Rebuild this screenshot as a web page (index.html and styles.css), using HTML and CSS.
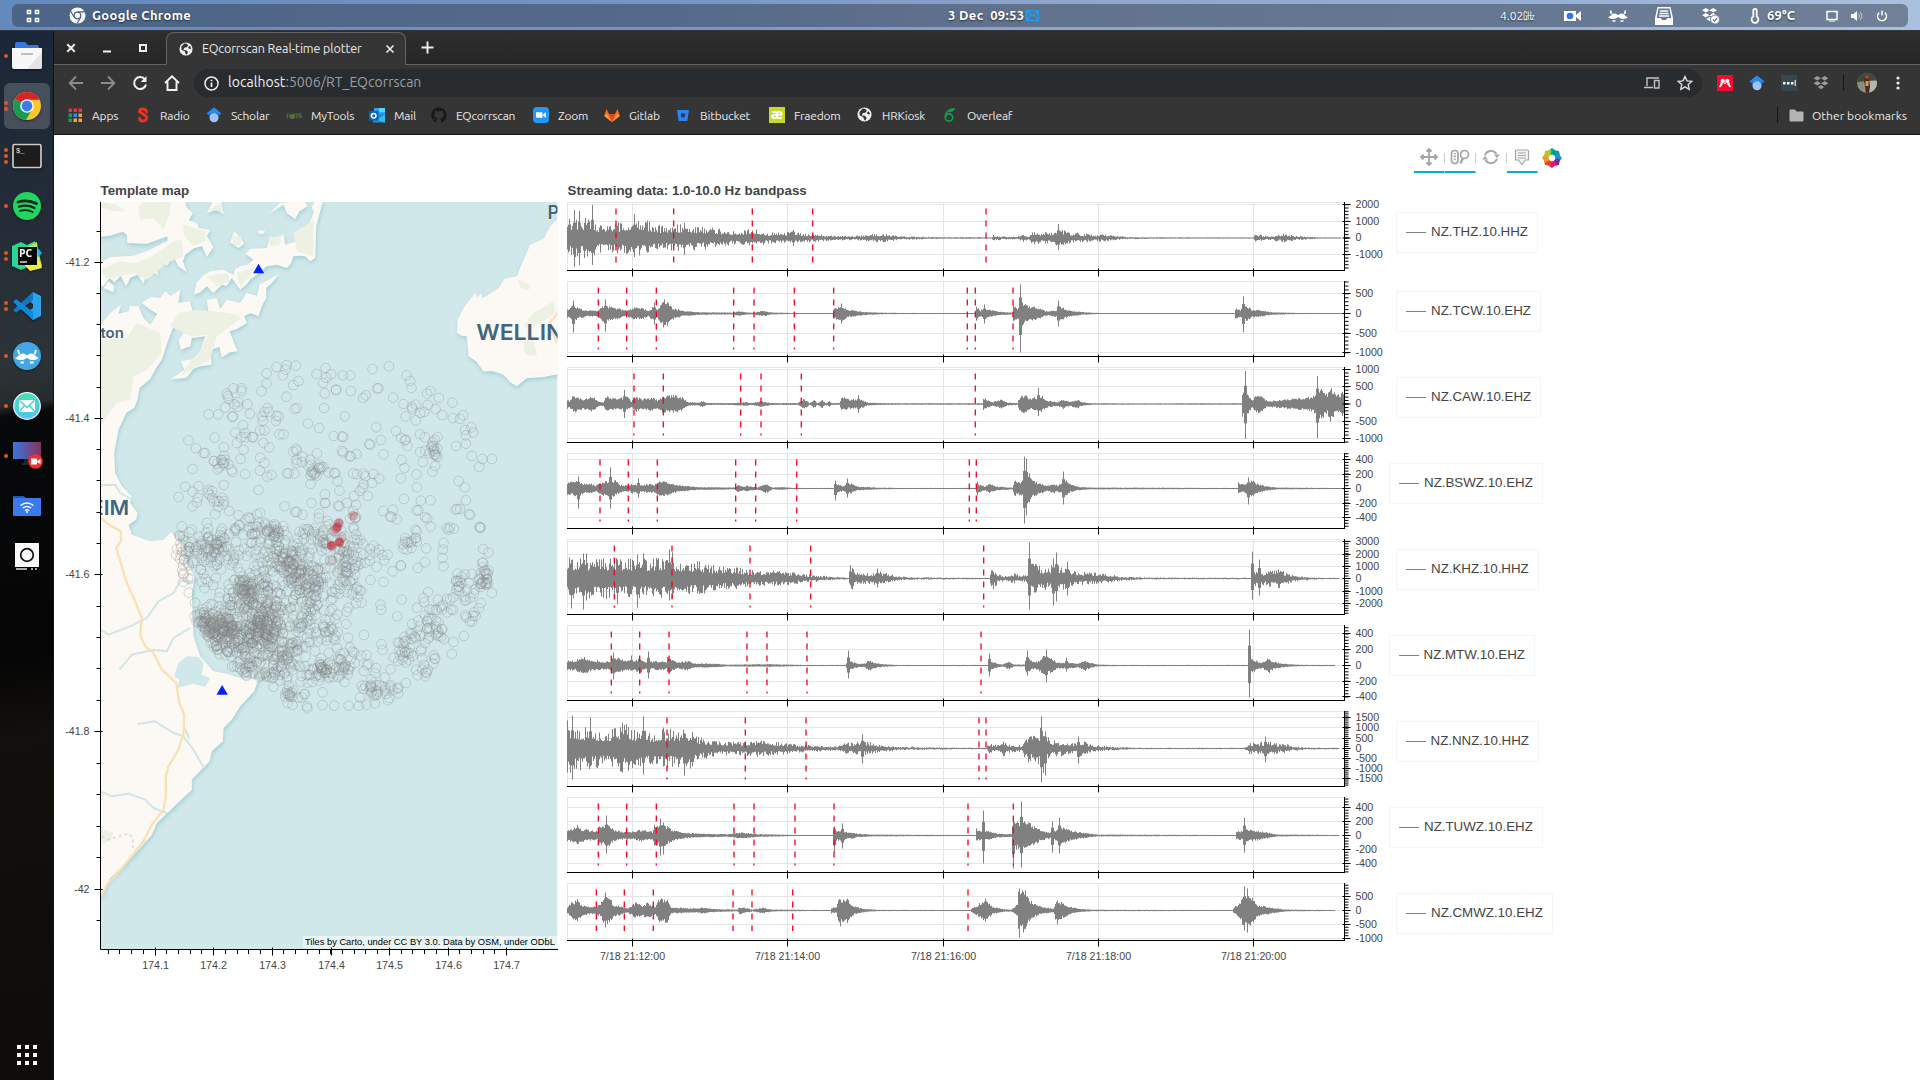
FILE: index.html
```html
<!DOCTYPE html>
<html lang="en">
<head>
<meta charset="utf-8">
<title>EQcorrscan Real-time plotter</title>
<link rel="stylesheet" href="styles.css">
</head>
<body>
<svg class="defs" width="0" height="0" aria-hidden="true">
  <symbol id="globe" viewBox="0 0 16 16"><circle cx="8" cy="8" r="7.500" fill="#eee"/><path d="M6 1.600 9 2l1.600 2.200L8.600 6 6 6.600 5 9l3.400.4 1.800 2L9 14.600 7.400 13 6.600 10.600 3 9 2.600 5.400ZM12.600 4.400 14 7.600l-2.600.2L10.400 6Z" fill="#333"/></symbol>
  <symbol id="dropbox" viewBox="0 0 16 16"><path d="M4.300 1 8 3.300 4.300 5.600.6 3.300ZM11.700 1l3.700 2.300-3.700 2.300L8 3.300ZM4.300 5.900 8 8.200l-3.700 2.300L.6 8.200ZM11.700 5.900l3.700 2.300-3.700 2.300L8 8.200ZM8 9.900l3.200 2.100L8 14.200 4.800 12Z" fill="currentColor"/></symbol>
  <symbol id="scholar" viewBox="0 0 16 16"><path d="M8 .5 15.500 6.600 8 13 .5 6.600Z" fill="#1a73d8"/><path d="M8 .5 15.500 6.600H.5Z" fill="#2b8be8"/><circle cx="8" cy="10.800" r="4.500" fill="#a0c3ff"/></symbol>
  <symbol id="moustache" viewBox="0 0 20 14"><path d="M2.500 1.500 3.500 5M17.500 1.500 16.500 5" stroke="currentColor" stroke-width="1.600"/><path d="M0 8C3 8 3 4.500 6.500 4.500 8.600 4.500 9.300 6 10 6s1.400-1.500 3.500-1.500C17 4.500 17 8 20 8c-2 2.600-7.500 2.600-10 0C7.500 10.600 2 10.600 0 8Z" fill="currentColor"/><path d="M4.500 12h3M12.500 12h3" stroke="currentColor" stroke-width="1.500"/></symbol>
</svg>

<header class="topbar">
  <div class="panel">
    <div class="panel-left">
      <svg width="14" height="14" viewBox="0 0 14 14" fill="none" stroke="#fff" stroke-width="1.500"><path d="M1.500 1.500h3v3h-3ZM9.500 1.500h3v3h-3ZM1.500 9.500h3v3h-3ZM9.500 9.500h3v3h-3Z"/></svg>
      <svg class="panel-app-icon" width="17" height="17" viewBox="0 0 17 17"><circle cx="8.500" cy="8.500" r="8" fill="#fff"/><circle cx="8.500" cy="8.500" r="3.300" fill="#fff" stroke="#4d6487" stroke-width="1.300"/><path d="M8.500 4.800H16M5.200 10.200 1.600 4M11.700 10.400 8 16.500" stroke="#4d6487" stroke-width="1.200"/></svg>
      <span class="panel-title">Google Chrome</span>
    </div>
    <div class="panel-clock"><span>3 Dec&nbsp; 09:53</span>
      <svg width="13" height="11" viewBox="0 0 13 11" fill="none" stroke="#1fa0ee" stroke-width="1.200"><path d="M.6.6h11.800v9.800H.6ZM1 1l5.500 5L12 1M1 10l4-5M12 10 8 5"/></svg>
    </div>
    <div class="panel-right">
      <span class="ghz">4.02㎓</span>
      <svg class="i-cam" width="20" height="16" viewBox="0 0 20 16"><path d="M1 3h12v10H1Z" fill="#fff"/><path d="m13 7 5-4v10l-5-4Z" fill="#fff"/><circle cx="7" cy="8" r="3.300" fill="#3273e6"/></svg>
      <svg class="i-mou" width="20" height="14"><use href="#moustache"/></svg>
      <svg class="i-tray" width="20" height="20" viewBox="0 0 20 20"><path d="M3.500 1h13l2.500 11v7H1v-7Z" fill="#fff"/><path d="M4.500 2.500h11l1.800 9.500h-4l-1.300 2H8l-1.300-2h-4Z" fill="#6b7b96"/><path d="M6 5h8M5.500 7.500h9M5 10h10" stroke="#fff" stroke-width="1.300"/></svg>
      <svg class="i-dbx" width="20" height="18" viewBox="0 0 20 18"><use href="#dropbox" width="17" height="16"/><circle cx="14" cy="12.500" r="4.500" fill="#fff" stroke="#71809a"/><path d="m12 12.500 1.500 1.600 2.700-3" fill="none" stroke="#5d6d88" stroke-width="1.200"/></svg>
      <svg class="i-therm" width="10" height="16" viewBox="0 0 10 16" fill="none" stroke="#fff" stroke-width="1.800"><path d="M3.300 8.500V2.600a1.700 1.700 0 0 1 3.400 0v5.900a3.400 3.400 0 1 1-3.400 0Z"/></svg>
      <span class="temp">69°C</span>
      <svg class="i-sq" width="14" height="14" viewBox="0 0 14 14"><rect x="2" y="2.500" width="10" height="8" fill="none" stroke="#fff" stroke-width="1.500"/><path d="M4 12h6" stroke="#fff"/></svg>
      <svg class="i-s" width="14" height="14" viewBox="0 0 14 14"><path d="M1 5h2.500L7 2v10L3.500 9H1Z" fill="#fff"/><path d="M8.500 4.500q2 2.500 0 5M10.500 3q3 4 0 8" stroke="#c4cbd6" fill="none"/></svg>
      <svg class="i-s" width="14" height="14" viewBox="0 0 14 14" fill="none" stroke="#fff" stroke-width="1.500"><path d="M4.200 3.700a4.500 4.500 0 1 0 5.600 0M7 1.500v5"/></svg>
    </div>
  </div>
</header>

<div class="desktop">
<nav class="dock">
  <div class="app"><span class="dots"><i></i></span><svg width="32" height="32" viewBox="0 0 32 32"><path d="M4 4q0-2 2-2h8l3 3h9q2 0 2 2v8H4Z" fill="#3577e5"/><path d="M1 8h30v19q0 2-2 2H3q-2 0-2-2Z" fill="#f7f7f7"/><path d="M31 12v15q0 2-2 2H16Z" fill="#e4e4e4"/><path d="M10 14h12" stroke="#aaa" stroke-width="1.500"/></svg></div>
  <div class="app active"><span class="dots"><i></i><i></i></span><svg width="30" height="30" viewBox="0 0 30 30"><circle cx="15" cy="15" r="14" fill="#fdc52b"/><path d="M15 15 2.900 8A14 14 0 0 1 27.500 8.700H15Z" fill="#d5252a"/><path d="M15 15 2.900 8A14 14 0 0 0 14 29l6-10.500Z" fill="#1a9a50"/><circle cx="15" cy="15" r="6.800" fill="#fff"/><circle cx="15" cy="15" r="5.400" fill="#3b7def"/></svg></div>
  <div class="app"><span class="dots"><i></i><i></i><i></i></span><svg width="30" height="26" viewBox="0 0 30 26"><rect x="1" y="1.500" width="28" height="23" rx="1.500" fill="#1c1c1c" stroke="#c9c9c9" stroke-width="1.700"/><text x="4" y="10" font-family="Liberation Mono" font-size="7" fill="#eee">$_</text></svg></div>
  <div class="app"><span class="dots"><i></i></span><svg width="30" height="30" viewBox="0 0 30 30"><circle cx="15" cy="15" r="14" fill="#1fd660"/><g fill="none" stroke="#15251b" stroke-linecap="round"><path d="M6 11q9.500-3 18.500 1.500" stroke-width="2.800"/><path d="M7 15.600q8.500-2.300 15.500 1.400" stroke-width="2.300"/><path d="M8 19.800q7-1.800 12.500 1.200" stroke-width="1.900"/></g></svg></div>
  <div class="app"><span class="dots"><i></i><i></i></span><svg width="32" height="32" viewBox="0 0 32 32"><path d="m1 6 9-4 6 3 8-4 2 8-4 16-12 5L1 26Z" fill="#27d797"/><path d="m12 9 14-7 1 8 4 16-11 4-10-8Z" fill="#b5ea4f"/><path d="m26 7 5 6-4 4Z" fill="#15b4f4"/><path d="m11 22 16-5 4 11-12 3Z" fill="#f2ec41"/><rect x="7" y="7" width="19" height="18" fill="#080808"/><text x="8" y="16.500" font-family="Open Sans" font-weight="700" font-size="10.500" fill="#fff">PC</text><path d="M9 22h7" stroke="#fff" stroke-width="1.300"/></svg></div>
  <div class="app"><span class="dots"><i></i><i></i></span><svg width="30" height="30" viewBox="0 0 30 30"><path d="m21 1 8 4v20l-8 4-7-7 7-5V13l-7-5Z" fill="#2aa3ee"/><path d="M21 1v8L4 22l-3-3Z" fill="#1277bd"/><path d="M21 29v-8L4 8l-3 3Z" fill="#0d89d8"/></svg></div>
  <div class="app"><span class="dots"><i></i></span><svg width="30" height="30" viewBox="0 0 30 30"><circle cx="15" cy="15" r="14" fill="#45a6e5"/><g color="#fff"><use href="#moustache" x="3" y="7" width="24" height="17"/></g></svg></div>
  <div class="app"><span class="dots"><i></i></span><svg width="30" height="30" viewBox="0 0 30 30"><defs><linearGradient id="mg" x2="0" y2="1"><stop stop-color="#43e2ad"/><stop offset="1" stop-color="#4fc6f0"/></linearGradient></defs><circle cx="15" cy="15" r="13.300" fill="url(#mg)" stroke="#eef" stroke-width="1.300"/><rect x="7" y="9" width="16" height="12" rx="1" fill="#fff"/><path d="m7.500 9.500 7.500 7 7.500-7M7.500 20.500l5-6M22.500 20.500l-5-6" fill="none" stroke="#49cfd2" stroke-width="1.300"/></svg></div>
  <div class="app"><span class="dots"><i></i></span><svg width="34" height="30" viewBox="0 0 34 30"><defs><linearGradient id="sg"><stop stop-color="#3b74df"/><stop offset="1" stop-color="#84345e"/></linearGradient></defs><path d="M3 1h28v17H3Z" fill="url(#sg)"/><path d="M14 18h6v4h2v2H12v-2h2Z" fill="#20242c"/><circle cx="25.500" cy="20.500" r="7.300" fill="#ee2f33"/><path d="M21 17.500h6v6h-6ZM27 20l3.500-2v5L27 21Z" fill="#fff"/></svg></div>
  <div class="app"><svg width="30" height="24" viewBox="0 0 30 24"><path d="M1 2h10l3 2h15v17q0 1-1 1H2q-1 0-1-1Z" fill="#3a7bea"/><path d="M1 2h10l3 2H1Z" fill="#2456b8"/><g fill="none" stroke="#fff" stroke-width="1.500"><path d="M8.500 11.500q6.500-5 13 0M10.800 14q4.200-3 8.400 0M13 16.500q2-1.400 4 0"/></g><circle cx="15" cy="18" r="1" fill="#fff"/></svg></div>
  <div class="app"><svg width="26" height="30" viewBox="0 0 26 30"><path d="M1 2h24v24H1Z" fill="#fafafa"/><path d="M2 28h11M17 28h2M21 28h2" stroke="#ddd" stroke-width="1.500"/><circle cx="13" cy="14" r="6.300" fill="none" stroke="#111" stroke-width="1.700"/></svg></div>
  <div class="app launcher"><svg width="22" height="22" viewBox="0 0 22 22" fill="#fff"><path d="M1 1h4v4H1ZM9 1h4v4H9ZM17 1h4v4h-4ZM1 9h4v4H1ZM9 9h4v4H9ZM17 9h4v4h-4ZM1 17h4v4H1ZM9 17h4v4H9ZM17 17h4v4h-4Z"/></svg></div>
</nav>

<main class="browser">
  <div class="tabstrip">
    <div class="winbtns">
      <svg width="12" height="12" viewBox="0 0 12 12" stroke="#f2f2f2" stroke-width="2"><path d="m2.300 2.300 7.400 7.400M9.700 2.300 2.300 9.700"/></svg>
      <svg width="12" height="12" viewBox="0 0 12 12" stroke="#f2f2f2" stroke-width="2"><path d="M2 9.500h8"/></svg>
      <svg width="12" height="12" viewBox="0 0 12 12" fill="none" stroke="#f2f2f2" stroke-width="2"><path d="M3 3h6v6H3Z"/></svg>
    </div>
    <div class="tab">
      <svg width="14" height="14"><use href="#globe"/></svg>
      <span>EQcorrscan Real-time plotter</span>
      <svg class="tab-close" width="10" height="10" viewBox="0 0 10 10" stroke="#e8e8e8" stroke-width="1.700"><path d="m1.500 1.500 7 7M8.500 1.500l-7 7"/></svg>
    </div>
    <svg class="newtab" width="13" height="13" viewBox="0 0 13 13" stroke="#eee" stroke-width="1.900"><path d="M6.500.5v12M.5 6.500h12"/></svg>
  </div>
  <div class="toolbar">
    <svg width="16" height="16" viewBox="0 0 16 16" fill="none" stroke="#8b8b8b" stroke-width="1.800"><path d="M15 8H2M8 1.500 1.700 8 8 14.500"/></svg>
    <svg width="16" height="16" viewBox="0 0 16 16" fill="none" stroke="#8b8b8b" stroke-width="1.800"><path d="M1 8h13M8 1.500 14.300 8 8 14.500"/></svg>
    <svg width="16" height="16" viewBox="0 0 16 16"><path d="M13 4.500A6 6 0 1 0 14 9.500" fill="none" stroke="#f2f2f2" stroke-width="2"/><path d="M14.500 1v6H8.700Z" fill="#f2f2f2"/></svg>
    <svg width="16" height="16" viewBox="0 0 16 16" fill="none" stroke="#f2f2f2" stroke-width="1.900"><path d="M1 8 8 1.300 15 8M3.500 6.500v8.500h9V6.500"/></svg>
    <div class="omnibox">
      <svg width="15" height="15" viewBox="0 0 15 15"><circle cx="7.500" cy="7.500" r="6.500" fill="none" stroke="#eee" stroke-width="1.500"/><path d="M7.500 6.500V11M7.500 3.800v1.500" stroke="#eee" stroke-width="1.700"/></svg>
      <span class="url">localhost<b>:5006/RT_EQcorrscan</b></span>
      <svg class="devices" width="16" height="12" viewBox="0 0 16 12" fill="none" stroke="#c4c4c4" stroke-width="1.400"><path d="M15 1H3v8M0 10.500h9M10.500 3.500h4.500v7.500h-4.500Z"/></svg>
      <svg class="star" width="16" height="16" viewBox="0 0 16 16" fill="none" stroke="#ddd" stroke-width="1.400"><path d="m8 1.500 2 4.400 4.700.5-3.500 3.200 1 4.700L8 11.900l-4.200 2.400 1-4.700L1.300 6.400 6 5.900Z"/></svg>
    </div>
    <div class="ext">
      <svg width="16" height="16" viewBox="0 0 16 16"><path d="M0 0h16v16H0Z" fill="#f5092d"/><path d="M2.500 12 4.500 9.500M13.500 12l-2-2.500" stroke="#fff" stroke-width="1.800"/><path d="M4.500 10V7.500M8 9V7.500M11.500 10V7.500" stroke="#fff" stroke-width="2.200"/><circle cx="5.700" cy="5.800" r="2.100" fill="#fff"/><circle cx="10.300" cy="5.800" r="2.100" fill="#fff"/></svg>
      <svg width="16" height="16"><use href="#scholar"/></svg>
      <svg width="16" height="16" viewBox="0 0 16 16"><path d="M0 0h16v16H0Z" fill="#37474f"/><path d="M2 7h2.500v2.500H2ZM6 7h2.500v2.500H6ZM10 7h2.500v2.500H10ZM13.700 5h1v6h-1Z" fill="#fff"/></svg>
      <svg width="16" height="16" color="#9b9b9b"><use href="#dropbox"/></svg>
    </div>
    <div class="ext-sep"></div>
    <svg class="avatar" width="20" height="20" viewBox="0 0 20 20"><defs><clipPath id="av"><circle cx="10" cy="10" r="10"/></clipPath></defs><g clip-path="url(#av)"><path d="M0 0h20v20H0Z" fill="#8b8d80"/><path d="M0 0h20v7L0 9Z" fill="#3d4a35"/><path d="M13 8h7v12h-8Z" fill="#b7b5ae"/><path d="M8 4q2-3 4 0v4l1 5-1 7H9l-1-7-1-5Z" fill="#4a2a22"/><path d="M8.500 8h3v5h-3Z" fill="#d9a13b"/><circle cx="10" cy="4" r="1.800" fill="#c7413a"/></g></svg>
    <svg class="menu" width="4" height="16" viewBox="0 0 4 16" fill="#eee"><circle cx="2" cy="3" r="1.600"/><circle cx="2" cy="8" r="1.600"/><circle cx="2" cy="13" r="1.600"/></svg>
  </div>
  <div class="bookmarks">
    <div class="bm"><svg width="16" height="16" viewBox="0 0 16 16"><path d="M1.500 1.500h3.500v3.500H1.500ZM6.500 1.500H10v3.500H6.500ZM11.500 1.500H15v3.500h-3.500Z" fill="#f0303c"/><path d="M1.500 6.500h3.500V10H1.500Z" fill="#15a05c"/><path d="M6.500 6.500H10V10H6.500Z" fill="#2b8df0"/><path d="M11.500 6.500H15V10h-3.500ZM6.500 11.500H10V15H6.500ZM11.500 11.500H15V15h-3.500Z" fill="#f2a33c"/><path d="M1.500 11.500h3.500V15H1.500Z" fill="#15a05c"/></svg><span>Apps</span></div>
    <div class="bm"><svg width="16" height="16" viewBox="0 0 16 16" fill="none" stroke="#ee3124" stroke-width="2.800" stroke-linecap="round" stroke-linejoin="round"><path d="M11.500 5Q11.500 2 8 2 4.500 2 4.500 4.500L11.500 9.500Q12 14 8 14 4.500 14 4.500 11.500"/></svg><span>Radio</span></div>
    <div class="bm"><svg width="16" height="16"><use href="#scholar"/></svg><span>Scholar</span></div>
    <div class="bm"><svg width="16" height="16" viewBox="0 0 16 16"><text x="0" y="10.500" font-family="DejaVu Serif" font-size="6" textLength="16" fill="#5d9a4c">F<tspan fill="#7fae2a" font-weight="700">@</tspan>TS</text></svg><span>MyTools</span></div>
    <div class="bm"><svg width="16" height="16" viewBox="0 0 16 16"><path d="M5 1h11v8H5Z" fill="#28a8ea"/><path d="M10 1h6v4h-6Z" fill="#50d9ff"/><path d="M4 7h12v8.500H4Z" fill="#1490df"/><path d="m16 7-8 6 8 2.500Z" fill="#35b8f1"/><path d="M0 4h9.500v9.500H0Z" fill="#0a64b5"/><circle cx="4.700" cy="8.700" r="2.300" fill="none" stroke="#fff" stroke-width="1.500"/></svg><span>Mail</span></div>
    <div class="bm"><svg width="16" height="16" viewBox="0 0 16 16"><path d="M8 .4a7.700 7.700 0 0 0-2.500 15c.4.100.5-.2.500-.400v-1.500c-2.100.500-2.600-.900-2.600-.900-.4-.9-.9-1.100-.9-1.100-.7-.500.100-.500.100-.500.800.100 1.200.800 1.200.800.700 1.200 1.800.900 2.300.700 0-.5.300-.9.500-1.100-1.700-.2-3.500-.9-3.500-3.800 0-.8.300-1.500.8-2.100 0-.2-.3-1 .1-2.100 0 0 .6-.2 2.100.8a7 7 0 0 1 3.800 0c1.500-1 2.100-.8 2.100-.8.4 1.100.1 1.900.1 2.100.5.600.8 1.200.8 2.100 0 2.900-1.800 3.600-3.500 3.800.3.200.500.700.500 1.400V15c0 .2.100.5.500.4A7.700 7.700 0 0 0 8 .4Z" fill="#181818"/></svg><span>EQcorrscan</span></div>
    <div class="bm"><svg width="16" height="16" viewBox="0 0 16 16"><rect width="16" height="16" rx="4" fill="#2196fb"/><path d="M3 5.300h5.500q1 0 1 1v4.400H4q-1 0-1-1ZM10.200 7.200 13 5.300v5.400l-2.800-1.900Z" fill="#fff"/></svg><span>Zoom</span></div>
    <div class="bm"><svg width="16" height="16" viewBox="0 0 16 16"><path d="M8 15 .3 9 2.500 2 5 7h6l2.500-5 2.200 7Z" fill="#fc6d26"/><path d="M8 15 5 7h6Z" fill="#e24329"/><path d="M.3 9 2 6.500 8 15ZM15.700 9 14 6.500 8 15Z" fill="#fca326"/></svg><span>Gitlab</span></div>
    <div class="bm"><svg width="16" height="16" viewBox="0 0 16 16"><path d="M2 3h12l-1.700 11H3.700Z" fill="#2684ff"/><path d="M5.800 6.500h4.400l-.7 4h-3Z" fill="#353535"/></svg><span>Bitbucket</span></div>
    <div class="bm"><div class="fraedom">æ</div><span>Fraedom</span></div>
    <div class="bm"><svg width="16" height="16"><use href="#globe" width="15" height="15"/></svg><span>HRKiosk</span></div>
    <div class="bm"><svg width="16" height="16" viewBox="0 0 16 16" fill="none" stroke="#11a04b" stroke-width="1.700"><circle cx="7" cy="10.500" r="3.700"/><path d="M3.500 9.500Q3.500 4 9 3"/><path d="M6 3.500Q9 1 13 1.500 11.500 4.500 7.500 5" fill="#11a04b" stroke-width=".8"/></svg><span>Overleaf</span></div>
    <div class="bm-other"><svg width="15" height="13" viewBox="0 0 15 13"><path d="M.5 1.500q0-1 1-1H6l1.500 2h6q1 0 1 1v8q0 1-1 1h-12q-1 0-1-1Z" fill="#b4b4b4"/></svg><span>Other bookmarks</span></div>
  </div>

  <div class="page">
    <div class="bk-toolbar">
      <div class="tool on"><svg width="18" height="18" viewBox="0 0 18 18" fill="none" stroke="#a1a6a9" stroke-width="1.800"><path d="M9 1v16M1 9h16M6.500 3.500 9 1l2.500 2.500M6.500 14.500 9 17l2.500-2.500M3.500 6.500 1 9l2.500 2.500M14.500 6.500 17 9l-2.500 2.500"/></svg></div>
      <div class="tool on"><svg width="20" height="18" viewBox="0 0 20 18" fill="none" stroke="#a1a6a9" stroke-width="1.700"><rect x="1.500" y="2.500" width="6.500" height="13" rx="3.200"/><path d="M4.800 5v1.500M3.500 8.500h2.500M4.800 10.500V12"/><circle cx="14.500" cy="6.500" r="4"/><path d="M13 10 10.500 15.500" stroke-width="2.300"/></svg></div>
      <div class="tool"><svg width="18" height="18" viewBox="0 0 18 18"><path d="M3 7.500A6.300 6.300 0 0 1 14.500 6M15 10.500A6.300 6.300 0 0 1 3.500 12" fill="none" stroke="#a1a6a9" stroke-width="1.900"/><path d="M12 6.500h6l-3 3.500ZM0 11.500h6L3 8Z" fill="#a1a6a9"/></svg></div>
      <div class="tool on"><svg width="16" height="18" viewBox="0 0 16 18" fill="#f3f3f3" stroke="#a1a6a9" stroke-width="1.200"><path d="M2.500 2h11q1 0 1 1v9h-3L8 16.500 4.500 12h-3V3q0-1 1-1Z"/><path d="M4 5h8M4 7.500h8M4 10h8"/></svg></div>
      <svg class="bk-logo" id="bk-logo" width="20" height="20" viewBox="-10 -10 20 20"></svg>
    </div>
    <div class="figure">
      <section class="mapcol">
        <h2>Template map</h2>
        <svg id="map" width="513" height="790" viewBox="54 202 513 790">
          <svg x="100.500" y="202" width="457" height="747" viewBox="151 97 1371 2241" preserveAspectRatio="none">
            <defs>
              <filter id="coast" x="-5%" y="-5%" width="110%" height="110%"><feDropShadow dx="2" dy="6" stdDeviation="6" flood-color="#7fbcc4" flood-opacity=".6"/></filter>
            </defs>
            <rect x="151" y="97" width="1371" height="2241" fill="#d1e8ea"/>
            <g fill="#fcf8f4" filter="url(#coast)">
              <path d="M140 90H405L408 112 428 130 416 152 440 160 446 175 480 180 470 200 490 232 470 262 456 230 432 235 405 255 398 275 410 308 385 290 376 272 365 258 358 275 350 290 338 272 328 275 320 295 324 318 306 302 292 305 280 342 262 315 240 325 228 350 212 318 193 338 178 325 160 350 140 350V285L180 262 250 258 300 240 352 213 352 200 320 212 290 222 232 220 230 195 218 186 180 198 140 202Z"/>
              <path d="M430 375 440 338 458 318 480 305 500 302 520 300 550 315 555 298 570 290 592 285 610 270 585 252 600 238 650 235 660 200 680 205 700 195 705 225 740 215 755 190 770 170 782 150 790 130 785 110 800 90H820L810 125 798 170 795 265 780 275 765 260 750 258 730 260 722 282 710 295 680 285 650 290 620 315 600 330 588 345 570 360 545 325 530 348 515 345 490 370 470 350 450 368Z"/>
              <path d="M470 130 490 92 515 92 512 115 525 135 498 120ZM655 132 690 100 760 92 772 110 748 125 735 148 710 130 700 105ZM540 218 552 185 568 200 582 222 565 235ZM622 184 645 182 640 193 626 192ZM160 355 175 335 192 350 190 368Z"/>
              <path d="M140 480 180 430 212 405 205 432 235 425 240 408 265 410 280 445 300 465 322 432 300 420 275 400 300 383 330 385 345 365 362 378 390 360 385 400 418 395 430 430 475 430 470 390 500 385 510 418 530 390 570 400 590 370 620 378 628 345 655 330 686 312 665 340 648 355 648 385 635 410 625 440 602 430 582 440 590 460 560 478 538 485 550 515 562 545 540 548 515 563 508 532 480 540 485 585 450 590 430 597 408 625 362 628 402 600 392 575 430 568 452 540 465 500 425 505 420 530 392 540 385 510 412 475 370 470 348 530 335 570 318 595 300 628 268 655 262 690 252 715 228 730 205 780 192 850 195 910 215 950 245 980 240 1000 262 1030 258 1050 235 1065 245 1095 300 1115 340 1110 362 1088 400 1125 410 1180 434 1220 425 1270 430 1400 450 1460 490 1505 530 1512 570 1525 624 1530 612 1565 570 1610 545 1650 520 1675 518 1715 485 1745 478 1775 425 1830 425 1860 320 1960 305 1995 225 2085 180 2125 151 2185 140 2185Z"/>
              <path d="M1530 140 1500 170 1480 207 1440 225 1420 270 1400 320 1362 328 1345 355 1330 365 1298 385 1292 370 1282 382 1275 370 1240 415 1222 450 1220 490 1235 498 1250 500 1255 560 1278 575 1300 605 1330 605 1360 615 1380 638 1400 650 1430 625 1480 622 1530 612Z"/>
            </g>
            <g fill="#edf1e3">
              <path d="M275 97H360V130L340 180 310 145 270 150 265 115ZM151 97 200 105 225 125 190 125 151 112ZM400 165 470 185 465 215 430 230 400 195ZM151 300 210 275 250 280 300 265 370 215 395 210 400 260 350 280 290 330 250 310 170 330ZM470 320 530 310 540 335 500 350ZM560 310 620 290 570 355ZM730 190 790 150 790 260 740 245ZM655 205 695 197 690 225 660 230ZM545 200 575 200 570 230 550 225ZM475 120 515 100 520 125Z"/>
              <path d="M151 510 230 505 260 460 330 490 335 550 290 600 250 620 240 690 200 700 151 770ZM385 430 440 420 540 430 575 445 500 500 480 570 390 620 420 575 455 540 470 495 420 500 360 470Z"/>
              <path d="M1405 330 1440 345 1435 362 1410 355ZM1450 430 1510 395 1515 430 1440 480 1420 470ZM1420 520 1450 500 1460 560 1425 555Z"/>
              <path d="M151 1975 190 1990 185 2010 151 2025Z"/>
            </g>
            <path d="M372 1520 385 1480 410 1460 445 1462 460 1480 455 1515 480 1525 465 1552 430 1542 380 1555 388 1530Z" fill="#d1e8ea"/>
            <g fill="none" stroke="#cfe6e7" stroke-width="6" stroke-linejoin="round">
              <path d="M151 947 195 945 210 970 245 990 300 1040 365 1085M430 1235H390L370 1270 325 1295 290 1345 240 1370 175 1395 151 1380M420 1375 370 1405 350 1445 310 1440 245 1455 208 1500M262 1663 315 1655 370 1690 400 1700 430 1740 462 1795M151 1865 185 1880 235 1872 285 1890 310 1915 350 1930M403 1675 417 1705"/>
            </g>
            <g fill="none" stroke="#fce0b4" stroke-width="7" stroke-linejoin="round">
              <path d="M151 1045 185 1070 212 1085 212 1115 198 1135 215 1190 230 1240 255 1295 275 1345 270 1395 285 1430 310 1450 335 1500 378 1540 388 1600 402 1635 400 1695 382 1745 355 1790 347 1820 347 1880 340 1920 305 1965 280 2015 235 2070 215 2095 170 2145 151 2185M1497 462 1530 420M1500 475 1522 520"/>
            </g>
            <path d="M155 2000 175 2010 205 2000 235 1992 248 2005 248 2035" fill="none" stroke="#ecd0d4" stroke-width="5" stroke-dasharray="9 9"/>
            <g class="place">
              <text x="1278" y="511" font-size="66" textLength="262" lengthAdjust="spacingAndGlyphs">WELLIN</text>
              <text x="1492" y="148" font-size="54">P</text>
              <text x="122" y="1035" font-size="60" textLength="115" lengthAdjust="spacingAndGlyphs">EIM</text>
              <text x="151" y="504" font-size="42" textLength="70" lengthAdjust="spacingAndGlyphs">ton</text>
            </g>
            <g id="quakes"></g>
            <path d="M609 311 625 282 642 311ZM499 1575 516 1546 533 1575Z" fill="#0022ff"/>
            <path d="M758 2299H1522V2337H758Z" fill="#fff" opacity=".5"/>
          </svg>
          <text class="attribution" x="305" y="945">Tiles by Carto, under CC BY 3.0. Data by OSM, under ODbL</text>
          <g id="map-axes"></g>
        </svg>
      </section>
      <section class="streams" id="streams">
        <h2>Streaming data: 1.0-10.0 Hz bandpass</h2>
      </section>
    </div>
  </div>
</main>
</div>
<script src="script.js"></script>
</body>
</html>
```
FILE: styles.css
```css
* { box-sizing: border-box; }
body { margin: 0; width: 1920px; height: 1080px; overflow: hidden; display: flex; flex-direction: column; font-family: Ubuntu, "Noto Sans", sans-serif; background: #fff; }
svg { display: block; flex: none; }
.defs { position: absolute; }

.topbar { height: 31px; flex: none; padding: 4px 12px; background: linear-gradient(90deg, #6489bd, #7694c5 35%, #8fa5ca 55%, #96aed3 80%, #a9c0de); border-bottom: 1px solid #30343c; }
.panel { height: 23px; border-radius: 6px; background: rgba(50, 60, 75, .48); display: grid; grid-template-columns: 936px auto 1fr; align-items: center; color: #fff; font-size: 13px; font-weight: 700; text-shadow: 0 1px 2px rgba(0, 0, 0, .6); line-height: 20px; }
.panel-left, .panel-right, .panel-clock { display: flex; align-items: center; white-space: nowrap; }
.panel-left { padding-left: 14px; }
.panel-app-icon { margin-left: 29px; }
.panel-title { margin-left: 6px; letter-spacing: .35px; }
.panel-clock { gap: 2px; letter-spacing: .32px; margin-top: -1px; }
.panel-left span { margin-top: -2px; }
.panel-right { justify-content: flex-end; padding-right: 19px; }
.ghz { font-weight: 400; font-size: 12px; width: 38px; }
.i-cam, .i-mou { margin-left: 25px; }
.i-tray { margin-left: 26px; }
.i-dbx { margin-left: 27px; }
.i-therm { margin-left: 29px; }
.temp { width: 32px; margin-left: 7px; letter-spacing: .2px; margin-top: -2px; }
.i-sq { margin-left: 26px; }
.i-s { margin-left: 11px; }

.desktop { flex: 1; display: flex; min-height: 0; }
.dock { width: 54px; flex: none; display: flex; flex-direction: column; background: linear-gradient(172deg, #1b2737 0, #232c37 180px, #2d3438 330px, #272b2d 372px, #08090b 382px, #050505 620px, #12100d 700px, #0d0c0b 100%); border-right: 1px solid #111; }
.app { height: 50px; flex: none; display: grid; grid-template-columns: 11px 1fr; align-items: center; }
.app > svg { grid-column: 1 / -1; grid-row: 1; justify-self: center; filter: drop-shadow(0 1px 1px rgba(0, 0, 0, .5)); z-index: 1; }
.dots { grid-column: 1; grid-row: 1; display: flex; flex-direction: column; gap: 2px; padding-left: 4px; z-index: 1; }
.dots i { width: 4px; height: 4px; border-radius: 50%; background: #e95420; }
.active::before { content: ""; grid-column: 1 / -1; grid-row: 1; width: 46px; height: 46px; margin-left: 4px; border-radius: 6px; background: #474f5b; }
.launcher { margin-top: auto; }

.browser { flex: 1; min-width: 0; display: flex; flex-direction: column; color: #e9e9e9; }
.tabstrip { height: 34px; flex: none; display: flex; align-items: flex-end; background: linear-gradient(#2e2e2e, #262626); border-bottom: 1px solid #656565; }
.winbtns { width: 112px; height: 33px; display: flex; align-items: center; gap: 24px; padding-left: 11px; }
.tab { width: 240px; height: 33px; margin-bottom: -1px; border: 1px solid #656565; border-bottom: 0; border-radius: 8px 8px 0 0; background: #353535; display: flex; align-items: center; padding: 0 10px 0 12px; font-size: 12.500px; white-space: nowrap; }
.tab span { margin-left: 9px; margin-top: -3px; letter-spacing: -.1px; }
.tab-close { margin-left: auto; }
.newtab { align-self: center; margin-left: 15px; }
.toolbar { height: 36px; flex: none; background: #353535; display: flex; align-items: center; padding-left: 14px; gap: 16px; }
.omnibox { width: 1508px; height: 28px; margin-left: -2px; border-radius: 14px; background: #282c2f; display: flex; align-items: center; padding: 0 9px 0 10px; }
.url { margin-left: 9px; margin-top: -2px; font-size: 14px; color: #f0f0f0; letter-spacing: .05px; }
.url b { font-weight: 400; color: #9b9fa2; }
.devices { margin-left: auto; }
.star { margin-left: 17px; }
.ext { display: flex; gap: 16px; margin-left: -1px; }
.ext-sep { width: 1px; height: 16px; background: #161616; margin-left: -2px; }
.avatar { margin-left: -3px; }
.menu { margin-left: 3px; }
.bookmarks { height: 34px; flex: none; background: #353535; border-bottom: 1px solid #151515; display: grid; grid-template-columns: 68px 71px 80px 83px 62px 102px 71px 71px 94px 88px 85px 1fr auto; align-items: center; padding: 1px 13px 6px; font-size: 12px; }
.bm { display: flex; align-items: center; gap: 9px; letter-spacing: -.2px; white-space: nowrap; }
.fraedom { width: 16px; height: 16px; background: #c7da2c; color: #fff; font-size: 14px; line-height: 14px; font-weight: 700; text-align: center; letter-spacing: 0; }
.bm-other { display: flex; align-items: center; gap: 8px; border-left: 1px solid #151515; padding-left: 11px; height: 16px; letter-spacing: .05px; white-space: nowrap; }

.page { flex: 1; background: #fff; color: #444; font-family: "Liberation Sans", Arial, sans-serif; display: flex; flex-direction: column; }
.bk-toolbar { display: flex; height: 38px; margin: 8px 0 2px 1360px; }
.tool { width: 31px; height: 30px; display: flex; align-items: center; justify-content: center; border-right: 1px solid transparent; padding-bottom: 2px; background: linear-gradient(#ccc, #ccc) 100% 10px / 1px 10px no-repeat; background-origin: border-box; background-clip: border-box; }
.tool.on { border-bottom: 2px solid #0aa9d8; padding-bottom: 0; }
.tool:nth-child(4) { background: none; }
.bk-logo { margin: 5px 0 0 4px; }
.figure { display: flex; }
.mapcol { width: 513px; flex: none; }
h2 { margin: 0; height: 19px; font-size: 13.330px; line-height: 16px; font-weight: 700; color: #444; white-space: nowrap; }
.mapcol h2 { padding-left: 46.500px; }
.streams h2 { padding-left: .5px; }
.tick-label { font: 10.670px "Liberation Sans", Arial, sans-serif; fill: #444; }
.attribution { font: 9.330px "Liberation Sans", Arial, sans-serif; fill: #000; }
.place { font-family: Inter, "Open Sans", sans-serif; font-weight: 600; fill: #40657f; stroke: #fff; stroke-width: 2; paint-order: stroke; }
.grid { stroke: #e5e5e5; fill: none; }
.axis { stroke: #000; fill: none; }
.wave { stroke: #808080; fill: none; }
.event { stroke: #f5001d; stroke-dasharray: 6 6; stroke-width: 1.300; }
.quake { fill: none; stroke: #808080; stroke-opacity: .3; stroke-width: 3; }
.detection { stroke: #808080; stroke-opacity: .3; stroke-width: 3; }
.row { display: flex; height: 86px; }
.row:nth-child(2) { height: 79px; }
.row svg { overflow: visible; }
.legend { height: 41px; margin-top: 10px; border: 1px solid #f5f5f5; display: flex; align-items: center; padding: 0 9px 2px; font-size: 13.330px; white-space: nowrap; }
.legend::before { content: ""; width: 20px; height: 1px; background: #808080; margin-right: 5px; margin-top: 2px; }
```
FILE: script.js
```js
const NS = "http://www.w3.org/2000/svg";
let seed = 20191203;
const rnd = () => {
  seed = (seed * 1664525 + 1013904223) % 4294967296;
  return seed / 4294967296;
};
const gauss = () => Math.sqrt(-2 * Math.log(rnd() + 1e-9)) * Math.cos(6.2832 * rnd());
const el = (parent, name, attrs, text) => {
  const e = document.createElementNS(NS, name);
  for (const k in attrs) e.setAttribute(k, attrs[k]);
  if (text !== undefined) e.textContent = text;
  parent.appendChild(e);
  return e;
};

// Each trace: frame height, tick [value, y], template pick positions,
// envelope [x, amplitude, ...], spikes [x, up, down, ...].
const PLOT_W = 778;
const TIME_TICKS = [[65.5, "7/18 21:12:00"], [220.5, "7/18 21:14:00"], [376.5, "7/18 21:16:00"], [531.5, "7/18 21:18:00"], [686.5, "7/18 21:20:00"]];
const STATIONS = [
  { id: "NZ.THZ.10.HHZ", left: 9, h: 68, rough: 1, ticks: [[2000, 2.5], [1000, 19.5], [0, 36], [-1000, 52.5]],
    picks: [49, 106.7, 185.3, 245.7, 419],
    env: [0,19,25,19,30,14,60,15,80,16,95,11,110,13,130,11,150,9,165,6,185,9,200,5,226,6,240,4,260,3,285,2,310,4,320,4,330,2,350,1.3,370,1,415,.8,424,.5,426,3,435,1.5,450,1.5,455,4,462,2,465,6,480,5,495,8,505,5,520,4,540,3,560,1.2,600,.7,686,.6,687,4,700,1.8,717,4,730,2,750,.8,773,.5],
    spikes: [7,28,29,12,27,27,25,33,27,67,24,19,117,15,17,226,8,8,491,14,12] },
  { id: "NZ.TCW.10.EHZ", left: 9, h: 75, ticks: [[500, 12.5], [0, 32.5], [-500, 52.5], [-1000, 71.5]],
    picks: [31.3, 59.7, 89.3, 166.7, 187, 227.3, 266.7, 400.3, 408.3, 446],
    env: [0,4,6,9,12,5,20,3,31,3,35,8,45,7,55,4,60,3,66,6,75,6,80,3,85,6,90,4,96,14,100,12,105,6,115,3,130,1.5,165,1,172,2.5,180,1,186,.8,195,3,205,1,230,.5,265,.5,266,5,274,8,280,4,295,2,310,1,330,.6,407,.5,409,8,413,3,417,6,425,3,435,1.5,445,1,446,8,450,5,455,12,460,8,470,6,480,2,490,4,493,7,500,4,510,2,525,.8,534,.5,667,.5,668,5,673,4,679,8,685,4,695,3,705,1.3,730,.6,775,.5],
    spikes: [6,13,19,38,14,18,87,11,11,274,10,10,417,9,10,453,29,39,491,13,13,676,17,19] },
  { id: "NZ.CAW.10.EHZ", left: 9, h: 75, ticks: [[1000, 2.5], [500, 19.5], [0, 37], [-500, 54.5], [-1000, 71.5]],
    picks: [67, 96.3, 173.7, 194, 234.3, 408.3],
    env: [0,5,2,3,6,9,15,5,25,8,30,3,36,2,38,8,48,6,60,7,64,3,68,8,75,5,85,7,90,4,95,8,108,9,115,7,120,2,130,1.5,135,3,140,1,165,1,178,2,185,1,193,3,205,1,230,1,236,5,240,3,242,1,247,4,250,1,255,4,258,1,262,3,264,1,272,1,274,8,280,5,285,5,295,4,300,1.5,320,.8,415,.8,416,7,420,4,425,2,434,5,440,1.5,450,1,453,9,457,9,463,6,475,8,478,4,490,2,496,5,502,2,510,5,514,2,525,.8,570,.7,674,.8,675,14,681,10,685,4,690,10,695,7,700,3,710,4,720,5,730,6,738,6,745,8,749,11,754,16,760,9,763,18,768,10,772,9,776,14,778,12],
    spikes: [57,14,14,291,9,9,471,16,12,678,33,35,750,28,34] },
  { id: "NZ.BSWZ.10.EHZ", left: 2, h: 75, ticks: [[400, 6.5], [200, 21.5], [0, 35.5], [-200, 50.5], [-400, 64.5]],
    picks: [33, 61.3, 90.3, 168.7, 188.7, 229.7, 402.3, 409.3],
    env: [0,6,11,8,18,4,22,6,28,3,33,6,38,8,48,8,53,4,62,3,65,5,75,3,82,5,87,4,92,8,98,8,104,5,115,3,130,1.5,160,1.2,167,1,170,4,175,2,180,3,190,1,198,5,205,1,215,1.5,225,.6,267,.6,270,4,275,3,284,5,290,2,310,1,330,.6,409,.6,412,4,418,2,421,5,430,2,445,1,447,9,450,6,455,8,461,18,465,10,470,6,480,3,487,5,490,3,499,8,503,4,510,2,520,1,670,.6,671,6,676,4,685,8,690,5,700,2,710,1,775,.5],
    spikes: [11,12,20,43,21,20,71,10,9,268,8,12,280,10,9,410,7,7,457,32,35,459,30,27,496,17,16,681,11,16] },
  { id: "NZ.KHZ.10.HHZ", left: 9, h: 75, rough: 1, ticks: [[3000, 2.5], [2000, 15.5], [1000, 27.5], [0, 39.5], [-1000, 52.5], [-2000, 64.5]],
    picks: [47.3, 105, 183, 243.7, 416.7],
    env: [0,19,80,18,100,19,115,14,130,16,150,11,170,11,180,8,195,7,215,7,230,5,250,3,270,1.5,281,1,283,12,290,6,300,5,313,7,320,5,330,2,345,1.3,400,.8,422,.8,424,13,430,5,437,2,445,5,455,3,460,5,465,16,472,13,480,10,487,14,500,10,510,7,525,5,530,6,540,4,555,2,580,1,683,.8,685,10,690,9,697,6,705,8,712,9,720,5,735,2,750,1,771,.6],
    spikes: [4,18,30,16,25,31,19,25,22,50,19,26,70,24,29,76,25,16,102,29,22,105,26,20,310,10,9,462,36,31,486,20,27,489,26,23,500,17,17,685,27,21,692,19,17] },
  { id: "NZ.MTW.10.EHZ", left: 1.5, h: 75, ticks: [[400, 8.5], [200, 24.5], [0, 40.5], [-200, 56.5], [-400, 71.5]],
    picks: [44.3, 72.7, 102, 180, 200, 240, 414],
    env: [0,5,8,5,14,9,18,8,24,5,30,5,36,4,40,4,44,5,50,8,58,5,68,5,72,8,78,4,85,4,95,5,99,3,100,9,104,6,110,3,121,5,127,2,145,2,160,1,180,1.2,200,1.5,220,1,240,.6,278,.6,279,3,284,4,290,2,298,2,301,6,306,3,315,1.5,330,.6,420,.6,421,5,427,3,435,1,442,4,447,1,457,1,459,9,465,4,470,4,476,10,485,7,490,3,502,3,510,2,518,5,522,3,530,1,550,.6,680,.6,681,15,684,8,690,4,695,3,701,8,706,4,715,2,730,.8,767,.6],
    spikes: [46,13,14,64,10,5,81,14,13,281,15,13,422,12,11,460,15,10,479,16,17,499,8,6,682,36,32] },
  { id: "NZ.NNZ.10.HHZ", left: 8.5, h: 75, rough: 1, ticks: [[1500, 6.5], [1000, 16.5], [500, 27.5], [0, 37.5], [-500, 47.5], [-1000, 57.5], [-1500, 67.5]],
    picks: [100, 178.3, 239, 412, 419],
    env: [0,24,15,20,30,18,40,17,50,20,60,22,70,16,85,16,95,19,105,18,115,18,125,18,130,11,140,9,150,7,170,6,190,8,210,6,230,4,250,3,270,2,277,5,290,6,300,7,310,4,330,2,350,1.5,400,.8,419,.8,421,5,430,3,436,8,440,4,455,3,457,13,466,12,476,22,482,9,490,7,500,7,508,5,515,8,522,4,540,2,570,.8,677,.7,682,5,690,6,705,7,712,4,717,5,725,2,745,1,771,.8],
    spikes: [0,28,24,5,33,31,23,31,15,55,26,24,76,32,26,117,14,27,295,14,15,474,32,34,478,17,27,511,12,15,698,12,14] },
  { id: "NZ.TUWZ.10.EHZ", left: 2, h: 75, ticks: [[400, 10.5], [200, 24.5], [0, 38.5], [-200, 52.5], [-400, 66.5]],
    picks: [31.3, 59.7, 89.3, 167, 187, 228, 267, 401, 446.3],
    env: [0,6,5,6,10,10,14,7,25,5,30,5,32,9,42,10,46,6,55,4,68,4,72,6,85,4,87,11,98,10,105,6,115,3,130,2,160,1.5,175,3,190,1.5,210,1,230,.5,266,.5,268,6,280,4,290,2,305,1,408,.5,409,7,413,4,420,5,430,2,445,1.5,447,14,453,14,457,18,465,10,475,5,483,3,495,8,505,5,515,3,530,1,668,.5,669,4,675,5,680,6,690,5,700,3,710,1,771,.6],
    spikes: [39,20,18,93,17,20,96,13,19,267,9,17,275,12,13,416,25,28,446,17,33,454,34,32,485,14,17,492,18,18,677,18,17] },
  { id: "NZ.CMWZ.10.EHZ", left: 9, h: 57, last: 1, ticks: [[500, 13.5], [0, 27.5], [-500, 41.5], [-1000, 55.5]],
    picks: [29.3, 57.3, 86.3, 166, 185, 225.7, 401],
    env: [0,3,4,8,10,11,14,6,20,4,28,4,33,6,36,14,42,14,46,6,52,5,60,2,68,8,75,5,80,8,88,4,92,12,100,12,104,3,115,3,130,2,135,3,150,1.5,170,1,172,4,185,1,195,3,205,1,263,.5,264,3,269,3,271,12,280,12,285,5,295,2,310,.7,403,.5,405,3,410,5,412,8,418,10,425,4,435,1.5,444,1,447,4,450,6,451,20,457,22,462,11,470,5,480,3,486,2,488,9,493,9,500,5,510,2,525,.8,665,.5,667,4,672,7,675,14,684,15,690,6,700,4,710,2,720,1,767,.5],
    spikes: [38,18,17,273,11,16,418,12,11,452,22,27,490,10,14,677,24,20,680,22,22] }
];

function drawStation(st, host) {
  const row = document.createElement("div");
  row.className = "row";
  const svg = el(row, "svg", { width: 820, height: st.h + 8 });
  const H = st.h + .5, zero = st.ticks.find(t => t[0] === 0)[1];

  let grid = `M.5 .5H${PLOT_W}M.5 .5V${H}`;
  for (const [x] of TIME_TICKS) grid += `M${x} 0V${H}`;
  for (const [, y] of st.ticks) grid += `M0 ${y}H${PLOT_W}`;
  el(svg, "path", { class: "grid", d: grid });

  const e = st.env, end = Math.min(e[e.length - 2], PLOT_W - 1);
  let d = "", k = 0;
  for (let x = 0; x <= end; x++) {
    while (k < e.length - 4 && e[k + 2] < x) k += 2;
    const f = Math.min(1, Math.max(0, (x - e[k]) / (e[k + 2] - e[k] || 1)));
    const a = e[k + 1] + (e[k + 3] - e[k + 1]) * f;
    const r = () => st.rough ? .42 + .7 * Math.pow(rnd(), 1.5) : .65 + .4 * rnd();
    let up = a * r(), dn = a * r();
    for (let s = 0; s < st.spikes.length; s += 3) {
      const dist = Math.abs(x - st.spikes[s]);
      if (dist <= 1) {
        const g = dist ? .55 : 1;
        up = Math.max(up, st.spikes[s + 1] * g);
        dn = Math.max(dn, st.spikes[s + 2] * g);
      }
    }
    up = Math.max(up, .5);
    dn = Math.max(dn, .5);
    d += `M${x + .5} ${(zero - up).toFixed(1)}V${(zero + dn).toFixed(1)}`;
  }
  el(svg, "path", { class: "wave", d });

  const y0 = 6.5, y1 = st.last ? 48 : st.h === 68 ? 61 : 68.5;
  for (const x of st.picks) el(svg, "line", { class: "event", x1: x, x2: x, y1: y0, y2: y1 });

  const right = PLOT_W - .5;
  let ax = `M0 ${H}H${PLOT_W}M${right} 0V${H}`;
  for (const [x] of TIME_TICKS) ax += `M${x} ${H - 2}V${H + 6}`;
  for (const [, y] of st.ticks) ax += `M${right - 2} ${y}H${right + 6}`;
  const n = st.ticks.length, step = (st.ticks[n - 1][1] - st.ticks[0][1]) / (n - 1) / 5;
  for (let y = zero; y > 0; y -= step) ax += `M${right} ${y.toFixed(1)}h4`;
  for (let y = zero; y < st.h; y += step) ax += `M${right} ${y.toFixed(1)}h4`;
  el(svg, "path", { class: "axis", d: ax });
  for (const [v, y] of st.ticks) el(svg, "text", { class: "tick-label", x: 788.5, y: y + 3 }, v);
  if (st.last) for (const [x, t] of TIME_TICKS) el(svg, "text", { class: "tick-label", x, y: 77, "text-anchor": "middle" }, t);

  const legend = document.createElement("div");
  legend.className = "legend";
  legend.style.marginLeft = st.left + "px";
  legend.textContent = st.id;
  row.appendChild(legend);
  host.appendChild(row);
}
const streams = document.getElementById("streams");
STATIONS.forEach(st => drawStation(st, streams));

// Catalogue epicentres listed individually (x, y in map units).
const POINTS = [679,592,709,586,737,588,698,617,706,600,649,611,649,641,634,665,729,646,745,634,709,681,799,613,826,595,843,614,828,624,819,640,824,671,858,661,858,660,878,617,900,617,967,598,1016,590,902,664,985,656,981,656,947,677,939,685,1029,684,1069,617,1080,634,1084,655,1141,664,1131,672,1166,685,1207,699,1060,703,1085,712,1097,705,1133,706,1156,718,1122,727,1087,719,1110,730,1066,740,1097,752,1176,736,1208,745,1239,737,1229,748,550,656,574,656,574,664,530,672,533,679,535,687,563,697,553,704,592,704,562,711,525,713,599,732,475,734,504,734,547,741,547,741,652,715,643,727,656,727,636,740,638,753,679,739,686,740,677,754,733,718,740,715,822,715,884,740,773,762,807,775,978,773,579,767,555,789,585,790,573,803,587,803,560,820,609,803,606,802,580,840,630,782,643,782,688,794,700,794,640,820,657,833,738,837,739,843,729,846,757,860,800,851,851,799,876,800,879,802,876,844,879,849,919,853,902,860,899,860,957,823,960,825,992,811,1000,854,1037,784,1053,805,1067,810,1064,812,1072,829,1109,794,1124,803,1162,802,1148,817,1150,830,1143,832,1152,838,1146,828,1158,858,1155,846,1162,862,1110,847,1118,877,1054,871,1063,895,1099,914,1052,926,1147,906,1245,781,1264,773,1269,789,1247,797,1247,822,1218,829,1265,859,1297,868,1325,868,1287,892,1225,934,1244,953,1247,992,1230,1018,1221,1018,1216,1020,1257,1033,1260,1036,1290,1073,1291,1075,1288,1072,1299,1138,1315,1149,415,812,493,804,437,836,460,850,465,850,521,833,522,858,493,874,490,874,522,880,519,885,502,899,508,893,571,868,630,864,643,880,544,900,547,907,585,913,629,903,427,898,651,921,664,916,625,961,710,911,715,911,733,912,739,870,740,880,755,877,780,870,790,912,793,915,796,910,800,918,786,908,814,893,820,892,781,943,852,910,855,911,862,934,868,963,824,974,909,912,921,914,940,912,945,920,970,913,987,927,966,940,940,944,937,955,929,964,953,979,1061,988,1100,953,1112,993,1141,992,1099,1022,405,951,445,949,427,966,475,961,473,969,385,982,443,984,486,964,486,985,492,995,507,995,427,1010,440,998,521,946,495,1033,537,1024,565,1037,703,1010,735,1027,740,1027,757,1035,784,1000,824,1000,826,1000,864,1008,868,1010,890,1000,918,1006,807,1032,806,1045,832,1054,999,1024,1020,1040,1024,1042,1040,1049,1028,1020,1105,1022,1125,1042,1131,1047,1141,1070,1096,1080,1100,1085,1096,1105,1070,1120,1075,1118,1190,1075,1199,1073,1211,1077,1195,1080,1180,1120,1128,1136,1070,1140,1060,1137,1012,1155,1178,1140,1177,1165,1052,1188,1124,1178,1180,1190,595,1043,600,1046,586,1050,630,1030,620,1035,395,1070,425,1080,470,1060,468,1090,1103,1195,1052,1187,1027,1205,1000,1237,961,1231,1120,1285,1055,1290,991,1305,993,1320,941,1396,1241,1399,1205,1453,1210,1417,1181,1408,1325,1270,1292,1300,852,1608,895,1608,926,1608,949,1605,974,1601,817,1606,817,1568,770,1610,772,1616,763,1574,763,1573,727,1606,712,1600,930,1583,935,1548,1067,1540,1013,1592,1018,1585,1286,1316];
// Denser swarms: centre x, centre y, spread x, spread y, count.
const SWARMS = [[485,1365,30,25,120],[590,1260,28,26,70],[630,1350,48,52,180],[540,1400,48,34,130],[480,1140,42,26,50],[715,1165,34,24,70],[752,1220,32,30,60],[680,1085,14,12,20],[650,1375,24,26,50],[400,1160,16,40,24],[400,1310,15,50,12],[600,1500,38,14,35],[680,1490,32,22,30],[720,1440,28,32,25],[815,1490,24,16,26],[720,1570,16,11,16],[780,1320,30,42,42],[795,1250,25,25,20],[885,1210,16,22,22],[890,1150,22,32,25],[820,1115,20,16,18],[955,1140,24,34,18],[980,1567,18,12,18],[1065,1450,22,20,24],[1110,1385,34,26,32],[1160,1325,24,27,18],[1238,1245,20,26,24],[1302,1222,12,22,28],[1262,1345,10,10,8],[1115,1500,16,16,10],[1020,1560,24,18,10],[505,1135,20,16,14],[880,1480,18,24,14],[960,1490,28,28,12],[1155,1470,10,8,4],[840,1400,18,18,12],[910,1450,12,10,5],[925,1270,16,24,10],[920,1055,14,22,10],[785,1090,16,10,9],[630,1070,20,14,10],[510,985,20,18,6],[790,900,20,20,10],[515,875,16,14,6],[1150,845,12,18,8],[1080,1120,16,14,8]];
const inside = (x, y) => ((x - 855) / 480) ** 2 + ((y - 1100) / 513) ** 2 < 1;
const quakes = document.getElementById("quakes");
const dot = (x, y) => el(quakes, "circle", { class: "quake", cx: x.toFixed(0), cy: y.toFixed(0), r: 14.5 });
for (let i = 0; i < POINTS.length; i += 2) dot(POINTS[i], POINTS[i + 1]);
for (const [cx, cy, sx, sy, n] of SWARMS)
  for (let i = 0; i < n; i++) {
    const x = cx + gauss() * sx, y = cy + gauss() * sy;
    if (inside(x, y)) dot(x, y);
  }
for (let i = 0; i < 340; i++) {
  const x = 450 + rnd() * 450, y = 1060 + rnd() * 480;
  if (inside(x, y)) dot(x, y);
}
[[909,1038,.35,"#c8404c"],[866,1060,.5,"#c8283c"],[862,1072,.5,"#c8283c"],[850,1085,.25,"#c8606c"],[875,1102,.25,"#c8606c"],[858,1076,.4,"#c8283c"],[868,1118,.65,"#d01c34"],[844,1128,.65,"#d01c34"],[847,1172,.35,"#c09a9e"]]
  .forEach(([cx, cy, o, c]) => el(quakes, "circle", { class: "detection", cx, cy, r: 13.5, fill: c, "fill-opacity": o }));

// Map axes.
const axes = document.getElementById("map-axes");
let ax = "M100.5 202V949.5H558";
const lats = [["-41.2", 262.5], ["-41.4", 418.5], ["-41.6", 574.5], ["-41.8", 731.5], ["-42", 889.5]];
const lons = [["174.1", 155.5], ["174.2", 213.5], ["174.3", 272.5], ["174.4", 331.5], ["174.5", 389.5], ["174.6", 448.5], ["174.7", 506.5]];
for (const [t, y] of lats) {
  ax += `M94.5 ${y}h8`;
  el(axes, "text", { class: "tick-label", x: 89.5, y: y + 3, "text-anchor": "end" }, t);
}
for (const [t, x] of lons) {
  ax += `M${x} 947.5v8`;
  el(axes, "text", { class: "tick-label", x, y: 969, "text-anchor": "middle" }, t);
}
for (const y of [231, 293, 324, 355, 387, 449, 480, 512, 543, 606, 637, 668, 700, 763, 794, 826, 857, 920]) ax += `M96.5 ${y + .5}h4`;
for (let i = -4; i < 31; i++) ax += `M${Math.floor(155 + i * 11.72) + .5} 949v5`;
el(axes, "path", { class: "axis", d: ax });

// Ring of coloured petals for the plot library's mark.
const PETALS = ["#10a860", "#0a97b0", "#1a90d8", "#7c2a85", "#f0146a", "#ee4030", "#f7931e", "#b0c832"];
const logo = document.getElementById("bk-logo");
PETALS.forEach((c, i) => el(logo, "path", { d: "M-4.5 -6.5 0 -9.900 5.500 -6.300 1.500 -3.300 -2.500 -3Z", fill: c, transform: `rotate(${i * 45})` }));
```
